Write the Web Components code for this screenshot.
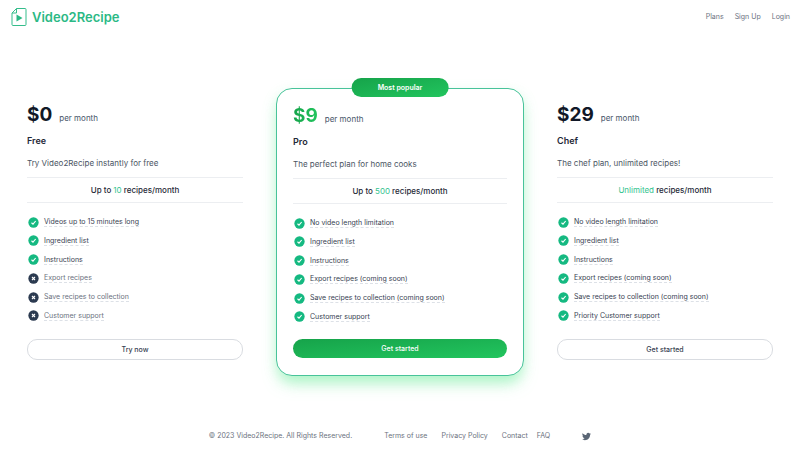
<!DOCTYPE html>
<html lang="en">
<head>
<meta charset="utf-8">
<title>Video2Recipe – Plans</title>
<style>
body { margin: 0; background: #fff; font-family: Inter, "Liberation Sans", sans-serif; font-size: 7px; line-height: 14px; color: #374151; }
</style>
</head>
<body>
<app-page>
  <site-header slot="header"></site-header>
  <plan-card price="$0" name="Free" summary="Try Video2Recipe instantly for free" action="Try now">
    <span slot="quota">Up to <quota-value>10</quota-value> recipes/month</span>
    <plan-feature>Videos up to 15 minutes long</plan-feature>
    <plan-feature>Ingredient list</plan-feature>
    <plan-feature>Instructions</plan-feature>
    <plan-feature excluded>Export recipes</plan-feature>
    <plan-feature excluded>Save recipes to collection</plan-feature>
    <plan-feature excluded>Customer support</plan-feature>
  </plan-card>
  <plan-card featured price="$9" name="Pro" summary="The perfect plan for home cooks" action="Get started">
    <span slot="quota">Up to <quota-value>500</quota-value> recipes/month</span>
    <plan-feature>No video length limitation</plan-feature>
    <plan-feature>Ingredient list</plan-feature>
    <plan-feature>Instructions</plan-feature>
    <plan-feature>Export recipes (coming soon)</plan-feature>
    <plan-feature>Save recipes to collection (coming soon)</plan-feature>
    <plan-feature>Customer support</plan-feature>
  </plan-card>
  <plan-card price="$29" name="Chef" summary="The chef plan, unlimited recipes!" action="Get started">
    <span slot="quota"><quota-value>Unlimited</quota-value> recipes/month</span>
    <plan-feature>No video length limitation</plan-feature>
    <plan-feature>Ingredient list</plan-feature>
    <plan-feature>Instructions</plan-feature>
    <plan-feature>Export recipes (coming soon)</plan-feature>
    <plan-feature>Save recipes to collection (coming soon)</plan-feature>
    <plan-feature>Priority Customer support</plan-feature>
  </plan-card>
  <site-footer slot="footer"></site-footer>
</app-page>
<script>
const define = (name, html, setup) => {
  const template = document.createElement('template');
  template.innerHTML = html;
  customElements.define(name, class extends HTMLElement {
    connectedCallback() {
      if (this.shadowRoot) return;
      const root = this.attachShadow({ mode: 'open' });
      root.append(template.content.cloneNode(true));
      if (setup) setup(this, root);
    }
  });
};

define('app-page', `
<style>
:host { display: flex; flex-direction: column; min-height: 100vh; }
main { display: grid; grid-template-columns: repeat(3, minmax(0, 1fr)); gap: 17px; padding: 54px 11px 53px; }
</style>
<slot name="header"></slot>
<main><slot></slot></main>
<slot name="footer"></slot>`);

define('site-header', `
<style>
:host { display: flex; align-items: center; justify-content: space-between; padding: 6px 10px; min-height: 22px; }
a { text-decoration: none; color: #6b7280; }
.brand { display: flex; align-items: center; gap: 4px; font-size: 13px; font-weight: 600; line-height: 20px; color: #2bb985; }
svg { width: 18px; height: 20px; }
nav { display: flex; gap: 11px; }
</style>
<a class="brand" href="#">
  <svg viewBox="0 0 18 20" fill="none" stroke="#34bd8b" stroke-linejoin="round" aria-hidden="true">
    <path d="M6.500 1.500H15Q16 1.500 16 2.500V17.500Q16 18.500 15 18.500H3Q2 18.500 2 17.500V6Z"/>
    <path d="M6.500 1.500V6H2"/>
    <path d="M6.500 7.500V14.500L12.500 11Z" fill="#2bb985" stroke="none"/>
  </svg>
  <span>Video2Recipe</span>
</a>
<nav><a href="#">Plans</a><a href="#">Sign Up</a><a href="#">Login</a></nav>`);

define('quota-value', `<style>:host { color: #34c38f; font-weight: 400; }</style><slot></slot>`);

define('plan-feature', `
<style>
:host { display: flex; align-items: center; gap: 5px; height: 14px; color: #374151; }
:host([excluded]) { color: #6b7280; }
svg { width: 11px; height: 11px; flex: none; }
.no, :host([excluded]) .yes { display: none; }
:host([excluded]) .no { display: block; }
span { line-height: 9px; border-bottom: 1px dashed #dde1e7; }
</style>
<svg class="yes" viewBox="0 0 22 22" aria-hidden="true"><circle cx="11" cy="11" r="10.300" fill="#15b981"/><path d="M7 11.500L10 14.300L15.300 8" fill="none" stroke="#fff" stroke-width="2.200"/></svg>
<svg class="no" viewBox="0 0 22 22" aria-hidden="true"><circle cx="11" cy="11" r="10.300" fill="#2b3a50"/><path d="M8 8L14 14M14 8L8 14" stroke="#fff" stroke-width="2.200"/></svg>
<span><slot></slot></span>`, (host) => host.setAttribute('role', 'listitem'));

define('plan-card', `
<style>
:host { position: relative; display: flex; flex-direction: column; padding: 16px; border-radius: 16px; }
:host([featured]) { border: 1px solid #48c39a; background: #fff;
  box-shadow: 0 10px 15px -3px #86efaca0, 0 4px 12px #bbf7d060; }
.badge { position: absolute; top: -11px; left: 50%; transform: translateX(-50%); padding: 0 26px; border-radius: 10px; line-height: 19px;
  font-weight: 600; white-space: nowrap; color: #fff; background: linear-gradient(to bottom right, #16a34a, #22c55e); }
.price { display: flex; align-items: baseline; gap: 7px; margin: 0; line-height: 22px; font-size: 8px; color: #475569; }
b { font-size: 19px; font-weight: 700; color: #111827; }
:host([featured]) b { color: transparent; background: linear-gradient(to right, #16a34a, #22c55e); background-clip: text; -webkit-background-clip: text; }
h2 { margin: 5px 0 0; font-size: 9px; line-height: 14px; font-weight: 600; color: #1f2937; }
.summary { margin: 8px 0 7px; font-size: 8px; line-height: 14px; color: #4b5563; }
.quota { padding: 5px 0; border: solid #eceef1; border-width: 1px 0; font-size: 8px; font-weight: 500; line-height: 14px; text-align: center; color: #1f2937; }
.features { display: flex; flex-direction: column; justify-content: space-between; height: 108px; margin: 12px 1px 0; }
button { width: 100%; margin-top: 16px; padding: 2px 0; border: 1px solid #d9dce1; border-radius: 10px; background: #fff;
  font: 500 7px/15px Inter, "Liberation Sans", sans-serif; color: #374151; }
:host([featured]) button { margin-top: 15px; border: 0; color: #fff; background: linear-gradient(to bottom right, #16a34a, #22c55e); }
</style>
<p class="price"><b></b><span>per month</span></p>
<h2></h2>
<p class="summary"></p>
<div class="quota"><slot name="quota"></slot></div>
<div class="features" role="list"><slot></slot></div>
<button type="button"></button>`, (host, root) => {
  root.querySelector('b').textContent = host.getAttribute('price');
  root.querySelector('h2').textContent = host.getAttribute('name');
  root.querySelector('.summary').textContent = host.getAttribute('summary');
  root.querySelector('button').textContent = host.getAttribute('action');
  if (host.hasAttribute('featured')) {
    const badge = document.createElement('div');
    badge.className = 'badge';
    badge.textContent = 'Most popular';
    root.append(badge);
  }
});

define('site-footer', `
<style>
:host { display: flex; justify-content: center; align-items: center; gap: 32px; }
a { color: #6b7280; text-decoration: none; }
p { margin: 0; color: #6b7280; }
nav { display: flex; gap: 14px; }
.help { display: flex; gap: 9px; }
svg { display: block; width: 9px; height: 9px; fill: #5b6675; }
</style>
<p>© 2023 Video2Recipe. All Rights Reserved.</p>
<nav><a href="#">Terms of use</a><a href="#">Privacy Policy</a><span class="help"><a href="#">Contact</a><a href="#">FAQ</a></span></nav>
<a href="#" aria-label="Twitter"><svg viewBox="0 0 24 24" aria-hidden="true"><path d="M23.950 4.570a10 10 0 0 1-2.820.775 4.960 4.960 0 0 0 2.160-2.720c-.950.560-2 .960-3.130 1.180a4.920 4.920 0 0 0-8.380 4.480C7.690 8.090 4.070 6.130 1.640 3.160a4.920 4.920 0 0 0 1.520 6.570 4.900 4.900 0 0 1-2.230-.610v.060a4.920 4.920 0 0 0 3.950 4.830 5 5 0 0 1-2.210.080 4.940 4.940 0 0 0 4.600 3.420A9.870 9.870 0 0 1 0 19.540a14 14 0 0 0 7.550 2.210c9.050 0 14-7.500 14-13.980 0-.210 0-.420-.020-.630a9.940 9.940 0 0 0 2.460-2.550z"/></svg></a>`);
</script>
</body>
</html>
